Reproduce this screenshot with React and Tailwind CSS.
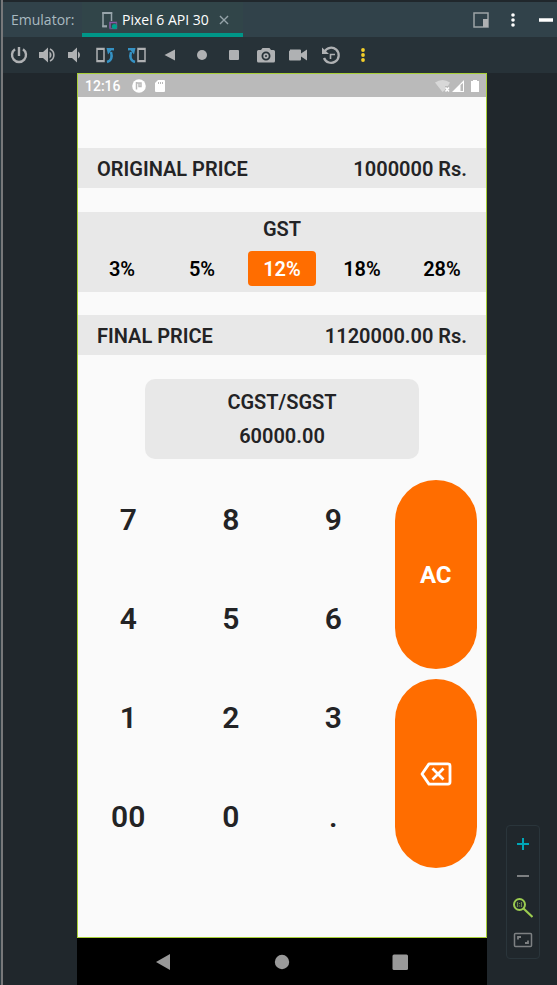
import { useState } from "react";

const rates = [3, 5, 12, 18, 28];
const keys = ["7", "8", "9", "4", "5", "6", "1", "2", "3", "00", "0", "."];

function Icon({ size = 20, className = "", children }) {
  return (
    <svg width={size} height={size} viewBox="0 0 20 20" fill="none" className={className} aria-hidden="true">
      {children}
    </svg>
  );
}

const audioTools = [
  {
    name: "Power",
    art: (
      <>
        <path d="M6 4.200A7 7 0 1 0 14 4.200" stroke="currentColor" strokeWidth="2.400" />
        <path d="M10 2v9" stroke="currentColor" strokeWidth="2.400" />
      </>
    ),
  },
  {
    name: "Volume up",
    art: (
      <>
        <path d="M2 7h4l5-4.500v15L6 13H2z" fill="currentColor" />
        <path d="M12.500 6.500a4 4 0 0 1 0 7" fill="currentColor" />
        <path d="M13 4a6.600 6.600 0 0 1 0 12" stroke="currentColor" strokeWidth="1.600" />
      </>
    ),
  },
  {
    name: "Volume down",
    art: (
      <>
        <path d="M3 7h4l5-4.500v15L7 13H3z" fill="currentColor" />
        <path d="M13 6.500a4 4 0 0 1 0 7z" fill="currentColor" />
      </>
    ),
  },
];

const deviceTools = [
  {
    name: "Rotate left",
    art: (
      <>
        <rect x="2" y="3.500" width="7" height="13" stroke="currentColor" strokeWidth="1.500" />
        <path d="M2 4h7M2 16h7" stroke="currentColor" strokeWidth="2" />
        <path d="M12 17c4.500-1.200 5.500-5 4-10" stroke="#3592c4" strokeWidth="2.500" />
        <path d="M11.500 3h7.500v2.500l-2.500-.2-3.500 4.200z" fill="#3592c4" />
      </>
    ),
  },
  {
    name: "Rotate right",
    art: (
      <>
        <rect x="11" y="3.500" width="7" height="13" stroke="currentColor" strokeWidth="1.500" />
        <path d="M11 4h7M11 16h7" stroke="currentColor" strokeWidth="2" />
        <path d="M8 17C3.500 15.800 2.500 12 4 7" stroke="#3592c4" strokeWidth="2.500" />
        <path d="M8.500 3H1v2.500l2.500-.2 3.500 4.200z" fill="#3592c4" />
      </>
    ),
  },
  { name: "Back", art: <path d="M4.500 10l10.500-5.500v11z" fill="currentColor" /> },
  { name: "Home", art: <circle cx="10" cy="10" r="5" fill="currentColor" /> },
  { name: "Overview", art: <rect x="5" y="5" width="10" height="10" rx="1" fill="currentColor" /> },
  {
    name: "Take screenshot",
    art: (
      <>
        <path
          fillRule="evenodd"
          clipRule="evenodd"
          d="M6.500 3h7l1.500 2h2.500A1.500 1.500 0 0 1 19 6.500v9.500a1.500 1.500 0 0 1-1.500 1.500h-15A1.500 1.500 0 0 1 1 16V6.500A1.500 1.500 0 0 1 2.500 5H5zM10 6.500a4.500 4.500 0 1 0 0 9 4.500 4.500 0 0 0 0-9z"
          fill="currentColor"
        />
        <circle cx="10" cy="11" r="2.700" fill="currentColor" />
        <circle cx="10" cy="11" r="1" fill="#273238" />
      </>
    ),
  },
  {
    name: "Record screen",
    art: <path d="M2 4.500h10a1 1 0 0 1 1 1v3l6-4v11l-6-4v3a1 1 0 0 1-1 1H2a1 1 0 0 1-1-1v-8a1 1 0 0 1 1-1z" fill="currentColor" />,
  },
  {
    name: "Snapshots",
    art: (
      <>
        <path d="M3.500 6.500A7.600 7.600 0 1 1 3 13" stroke="currentColor" strokeWidth="2.300" />
        <path d="M1 2.500V9h7z" fill="currentColor" />
        <path d="M9.500 14v-4.500H14" stroke="currentColor" strokeWidth="1.600" />
      </>
    ),
  },
  {
    name: "More",
    art: (
      <g fill="#f4cf2a">
        <circle cx="10" cy="5" r="1.900" />
        <circle cx="10" cy="10" r="1.900" />
        <circle cx="10" cy="15" r="1.900" />
      </g>
    ),
  },
];

function Header() {
  return (
    <header className="flex h-[35px] items-stretch bg-[#31424a] font-['Open_Sans','Noto_Sans',sans-serif] text-sm">
      <div className="flex w-[79px] items-center pl-2 text-[#a9b9c0]">Emulator:</div>
      <div className="flex w-[161px] items-center border-b-4 border-[#009688] bg-[#314549] pl-4 pt-1 text-white">
        <Icon className="mr-1 shrink-0">
          <path d="M9 16.500H5V3h8.500v8" stroke="#98a5ab" strokeWidth="1.500" />
          <path d="M4.300 3h9.900M4.300 16.200H9" stroke="#98a5ab" strokeWidth="2" />
          <path d="M12 18.500v-6h7" stroke="#8c5ba8" strokeWidth="1.500" />
          <path d="M11.500 18.500h7v-6" stroke="#69588a" strokeWidth="1.500" />
          <circle cx="16.500" cy="16.500" r="2.600" fill="#00a08c" />
        </Icon>
        <span className="whitespace-nowrap">Pixel 6 API 30</span>
        <button type="button" aria-label="Close tab" className="ml-1.5 text-[#95a3a9]">
          <Icon size={18}>
            <path d="M5.500 5.500l9 9M14.500 5.500l-9 9" stroke="currentColor" strokeWidth="1.500" />
          </Icon>
        </button>
      </div>
      <div className="ml-auto flex items-center gap-3 pr-0.5">
        <button type="button" aria-label="Window mode" className="text-[#9da4a7]">
          <Icon>
            <rect x="3" y="3" width="14" height="14" stroke="currentColor" strokeWidth="1.500" />
            <path d="M12 9h5v8h-5z" fill="#afb1b3" />
          </Icon>
        </button>
        <button type="button" aria-label="Options" className="text-white">
          <Icon>
            <circle cx="10" cy="5" r="1.800" fill="currentColor" />
            <circle cx="10" cy="10" r="1.800" fill="currentColor" />
            <circle cx="10" cy="15" r="1.800" fill="currentColor" />
          </Icon>
        </button>
        <button type="button" aria-label="Hide" className="text-white">
          <Icon>
            <path d="M4 10h14" stroke="currentColor" strokeWidth="3.500" />
          </Icon>
        </button>
      </div>
    </header>
  );
}

function Toolbar() {
  return (
    <div className="flex h-9 items-center bg-[#273238] pl-[2px] text-[#afb1b3]">
      {audioTools.map((tool) => (
        <button key={tool.name} type="button" aria-label={tool.name} className="flex w-7 justify-center">
          <Icon>{tool.art}</Icon>
        </button>
      ))}
      <div className="grid w-[290px] grid-cols-9">
        {deviceTools.map((tool) => (
          <button key={tool.name} type="button" aria-label={tool.name} className="flex justify-center">
            <Icon>{tool.art}</Icon>
          </button>
        ))}
      </div>
    </div>
  );
}

function StatusBar() {
  return (
    <div className="flex h-[23px] items-center bg-[#bababa] pl-2 pr-1.5 text-sm font-medium text-white">
      <span>12:16</span>
      <svg width="14" height="14" viewBox="0 0 14 14" className="ml-[11px]" aria-hidden="true">
        <circle cx="7" cy="7" r="6.800" fill="white" />
        <path d="M4.500 3v7.500M5 4h4v3.500H7V3.500" stroke="#bababa" strokeWidth="1.500" fill="none" />
      </svg>
      <svg width="12" height="14" viewBox="0 0 12 14" className="ml-2" aria-hidden="true">
        <path d="M4 1h6a1 1 0 0 1 1 1v10a1 1 0 0 1-1 1H2a1 1 0 0 1-1-1V4z" fill="white" />
        <path d="M4.500 3v2M6.500 3v2M8.500 3v2" stroke="#bababa" />
      </svg>
      <svg width="46" height="14" viewBox="0 0 46 14" className="ml-auto" aria-hidden="true">
        <path d="M0 3.500q7.500-5 15 0L13 7h-3v4L7.500 13z" fill="#d8d8d8" />
        <path d="M10.500 8.500l3.500 4M14 8.500l-3.500 4" stroke="white" strokeWidth="1.500" />
        <path fillRule="evenodd" d="M17 13L29 1v12zM25.500 6v6H28V4z" fill="white" />
        <path d="M36 2h2V1h4v1h2v11h-8z" fill="white" />
      </svg>
    </div>
  );
}

function PriceRow({ label, value, className = "" }) {
  return (
    <div className={`flex h-10 items-center justify-between bg-[#e8e8e8] px-5 pt-[2px] ${className}`}>
      <span>{label}</span>
      <span>{value} Rs.</span>
    </div>
  );
}

function Calculator() {
  const [amount, setAmount] = useState("1000000");
  const [rate, setRate] = useState(12);
  const tax = (Number(amount || 0) * rate) / 100;
  const total = Number(amount || 0) + tax;

  return (
    <main className="relative flex grow flex-col bg-[#fafafa] pt-px font-['Roboto',sans-serif] text-xl font-semibold text-[#232325]">
      <StatusBar />
      <PriceRow label="ORIGINAL PRICE" value={amount || "0"} className="mt-[51px]" />
      <section className="mt-6 h-20 bg-[#e8e8e8] px-[5px] pt-[3px] text-center">
        <h2 className="h-7 leading-7">GST</h2>
        <div className="mt-2 grid grid-cols-5 text-black">
          {rates.map((r) => (
            <button
              key={r}
              type="button"
              aria-pressed={r === rate}
              onClick={() => setRate(r)}
              className={`mx-1.5 h-[35px] rounded ${r === rate ? "bg-[#ff6d00] text-white" : ""}`}
            >
              {r}%
            </button>
          ))}
        </div>
      </section>
      <PriceRow label="FINAL PRICE" value={total.toFixed(2)} className="mt-[23px]" />
      <section className="mx-[68px] mt-6 h-20 rounded-[10px] bg-[#e8e8e8] pt-[6px] text-center">
        <h2 className="h-[34px] leading-[34px]">CGST/SGST</h2>
        <p className="h-[34px] leading-[34px]">{(tax / 2).toFixed(2)}</p>
      </section>
      <div className="mt-[11px] flex">
        <div className="grid w-3/4 auto-rows-[99px] grid-cols-3 text-3xl">
          {keys.map((k) => (
            <button key={k} type="button" onClick={() => setAmount(amount + k)}>
              {k}
            </button>
          ))}
        </div>
        <div className="flex w-1/4 flex-col gap-2.5 px-2.5 pt-2.5 text-2xl font-bold text-white">
          <button type="button" onClick={() => setAmount("")} className="h-[189px] rounded-full bg-[#ff6d00]">
            AC
          </button>
          <button
            type="button"
            aria-label="Delete last digit"
            onClick={() => setAmount(amount.slice(0, -1))}
            className="flex h-[189px] items-center justify-center rounded-full bg-[#ff6d00]"
          >
            <svg width="32" height="24" viewBox="0 0 32 24" fill="none" stroke="white" strokeWidth="2.800" aria-hidden="true">
              <path d="M9 1.900h19q2 0 2 2v16.200q0 2-2 2H9L2 12z" strokeLinejoin="round" />
              <path d="M12.500 6.500l11 11M23.500 6.500l-11 11" />
            </svg>
          </button>
        </div>
      </div>
      <div className="pointer-events-none absolute inset-0 border border-[#a8cf38]" />
    </main>
  );
}

function NavBar() {
  return (
    <nav className="flex h-[47px] items-center justify-between bg-black px-[76px] text-[#999999]">
      <button type="button" aria-label="Android back">
        <Icon>
          <path d="M3 10l14-8v16z" fill="currentColor" />
        </Icon>
      </button>
      <button type="button" aria-label="Android home">
        <Icon>
          <circle cx="10" cy="10" r="7.200" fill="currentColor" />
        </Icon>
      </button>
      <button type="button" aria-label="Android recents">
        <Icon>
          <rect x="1.500" y="2.500" width="15.500" height="15.500" rx="1.500" fill="currentColor" />
        </Icon>
      </button>
    </nav>
  );
}

function ZoomPanel() {
  return (
    <div className="flex w-[34px] flex-col items-center gap-3 rounded border border-[#2a353b] py-2 text-[#7d8082]">
      <button type="button" aria-label="Zoom in" className="text-[#00a6b8]">
        <Icon>
          <path d="M4 10h12M10 4v12" stroke="currentColor" strokeWidth="2" />
        </Icon>
      </button>
      <button type="button" aria-label="Zoom out">
        <Icon>
          <path d="M4 10h12" stroke="currentColor" strokeWidth="2" />
        </Icon>
      </button>
      <button type="button" aria-label="Actual size" className="text-[#9ccc50]">
        <Icon>
          <circle cx="6.500" cy="6.500" r="5.500" stroke="currentColor" strokeWidth="2" />
          <path d="M10.500 10.500l9 8.500" stroke="currentColor" strokeWidth="2.200" />
          <path d="M4.500 4v5M8.500 4v5M6.500 5v1M6.500 7.500v1" stroke="#6f8f48" strokeWidth="1.200" />
        </Icon>
      </button>
      <button type="button" aria-label="Fit to window">
        <Icon>
          <rect x="1.500" y="3.500" width="17" height="13" rx="1" stroke="currentColor" strokeWidth="1.500" />
          <path d="M5 9.500V7h3M15 10.500V13h-3" stroke="currentColor" strokeWidth="1.800" />
        </Icon>
      </button>
    </div>
  );
}

export default function App() {
  return (
    <div className="flex min-h-screen bg-[#20272c]">
      <div className="w-[3px] shrink-0 border-l border-[#2c3a41] bg-[#77787a]" />
      <div className="flex min-w-0 grow flex-col pt-[2px]">
        <Header />
        <Toolbar />
        <div className="flex grow pl-[74px]">
          <div className="flex min-w-0 grow flex-col">
            <Calculator />
            <NavBar />
          </div>
          <aside className="flex w-[70px] shrink-0 flex-col items-start justify-end pb-[26px] pl-[19px]">
            <ZoomPanel />
          </aside>
        </div>
      </div>
    </div>
  );
}
